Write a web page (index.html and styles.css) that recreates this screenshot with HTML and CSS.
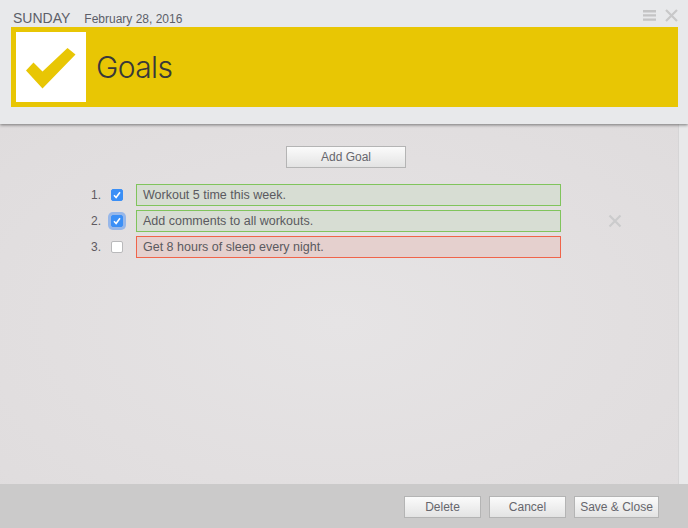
FILE: index.html
```html
<!DOCTYPE html>
<html lang="en">
<head>
<meta charset="utf-8">
<title>Goals</title>
<link rel="stylesheet" href="styles.css">
</head>
<body>
<div class="app">
  <header class="header">
    <div class="topline">
      <span class="day">SUNDAY</span>
      <span class="date">February 28, 2016</span>
      <div class="window-tools">
        <svg class="tool-menu" width="13" height="11" viewBox="0 0 13 11"><path d="M0 0h13v2.4H0zM0 4.2h13v2.4H0zM0 8.4h13v2.4H0z" fill="#c4c4c5"/></svg>
        <svg class="tool-close" width="13" height="13" viewBox="0 0 13 13"><path d="M1 1l11 11M12 1L1 12" stroke="#c8c8c9" stroke-width="2.2" fill="none"/></svg>
      </div>
    </div>
    <div class="banner">
      <div class="banner-icon">
        <svg width="50" height="41" viewBox="0 0 50 41"><path d="M0 22.500L7.500 14.500L16.500 23.500L41.500 0L49.500 6.500L16.500 40.500Z" fill="#e8c604"/></svg>
      </div>
      <h1 class="banner-title">Goals</h1>
    </div>
  </header>
  <div class="middle">
    <main class="content">
      <div class="add-row"><button class="btn btn-add">Add Goal</button></div>
      <div class="goals">
        <div class="goal">
          <span class="num">1.</span>
          <span class="check checked"><svg width="8" height="8" viewBox="0 0 8 8"><path d="M1 4.300L3.100 6.500L7 1.200" stroke="#fff" stroke-width="1.600" fill="none"/></svg></span>
          <div class="goal-text done">Workout 5 time this week.</div>
        </div>
        <div class="goal">
          <span class="num">2.</span>
          <span class="check checked focused"><svg width="8" height="8" viewBox="0 0 8 8"><path d="M1 4.300L3.100 6.500L7 1.200" stroke="#fff" stroke-width="1.600" fill="none"/></svg></span>
          <div class="goal-text done">Add comments to all workouts.</div>
          <svg class="goal-remove" width="14" height="14" viewBox="0 0 14 14"><path d="M1.500 1.500l11 11M12.500 1.500l-11 11" stroke="#cbcbcc" stroke-width="2.200" fill="none"/></svg>
        </div>
        <div class="goal">
          <span class="num">3.</span>
          <span class="check"></span>
          <div class="goal-text missed">Get 8 hours of sleep every night.</div>
        </div>
      </div>
    </main>
    <div class="track"></div>
  </div>
  <footer class="footer">
    <button class="btn btn-foot">Delete</button>
    <button class="btn btn-foot">Cancel</button>
    <button class="btn btn-save">Save &amp; Close</button>
  </footer>
</div>
</body>
</html>
```
FILE: styles.css
```css
* { box-sizing: border-box; }
html, body { margin: 0; height: 100%; }
body {
  font-family: "Liberation Sans", Arial, sans-serif;
  color: #5a5a60;
  overflow: hidden;
}
.app {
  width: 688px;
  height: 528px;
  display: flex;
  flex-direction: column;
}
.header {
  height: 124px;
  flex: none;
  background: #e8e9eb;
  padding: 10px 10px 0 11px;
  box-shadow: 0 1px 3px rgba(60, 60, 60, .65);
  position: relative;
  z-index: 2;
}
.topline {
  height: 17px;
  display: flex;
  align-items: baseline;
  padding-left: 2px;
}
.day { font-size: 14px; color: #5c5f69; }
.date { font-size: 12px; margin-left: 14px; color: #5c5f69; }
.window-tools {
  margin-left: auto;
  display: flex;
  align-items: center;
  gap: 9px;
  align-self: flex-start;
  padding-right: 0;
  margin-top: -1px;
}
.banner {
  width: 667px;
  height: 80px;
  background: #e8c604;
  padding: 5px;
  display: flex;
  align-items: center;
}
.banner-icon {
  width: 70px;
  height: 70px;
  background: #fff;
  display: flex;
  align-items: center;
  justify-content: center;
  padding-top: 2px;
}
.banner-title {
  margin: 0 0 0 10px;
  font-size: 30px;
  font-weight: 300;
  font-family: Inter, "Liberation Sans", sans-serif;
  letter-spacing: -.6px;
  color: #38383a;
}
.middle {
  flex: 1;
  display: flex;
  min-height: 0;
}
.content {
  flex: 1;
  background: radial-gradient(ellipse at 50% 55%, #e6e4e5 0%, #e2dfe0 60%, #dfdcdd 100%);
  padding-top: 22px;
}
.track {
  width: 10px;
  background: #e9e9ea;
  border-left: 1px solid #d6d5d6;
}
.add-row {
  display: flex;
  padding-left: 286px;
}
.btn {
  height: 22px;
  padding: 0;
  border: 1px solid #b4b4b4;
  background: linear-gradient(#fbfbfb, #e3e3e3);
  font: 12px "Liberation Sans", Arial, sans-serif;
  color: #66666c;
}
.btn-add { width: 120px; }
.goals {
  margin-top: 16px;
  display: flex;
  flex-direction: column;
  gap: 4px;
}
.goal {
  height: 22px;
  display: flex;
  align-items: center;
}
.num {
  width: 101px;
  text-align: right;
  font-size: 12px;
  color: #5f5a60;
}
.check {
  width: 12px;
  height: 12px;
  margin-left: 10px;
  border-radius: 2px;
  background: #fff;
  border: 1px solid #b9b9bb;
  display: flex;
  align-items: center;
  justify-content: center;
}
.check.checked {
  background: #3b8ff6;
  border-color: #3b8ff6;
}
.check.focused { box-shadow: 0 0 0 3px rgba(90, 150, 240, .55); }
.goal-text {
  width: 425px;
  height: 22px;
  margin-left: 13px;
  padding: 0 6px;
  border: 1px solid;
  font-size: 12.500px;
  line-height: 20px;
  color: #5a5a60;
}
.done { background: #d7ddd3; border-color: #80c45c; }
.missed { background: #e5d0ce; border-color: #f0644a; }
.goal-remove { margin-left: 47px; }
.footer {
  height: 44px;
  flex: none;
  background: #cbcaca;
  display: flex;
  justify-content: flex-end;
  gap: 8px;
  padding: 12px 29px 0 0;
}
.btn-foot { width: 77px; }
.btn-save { width: 85px; }
```
